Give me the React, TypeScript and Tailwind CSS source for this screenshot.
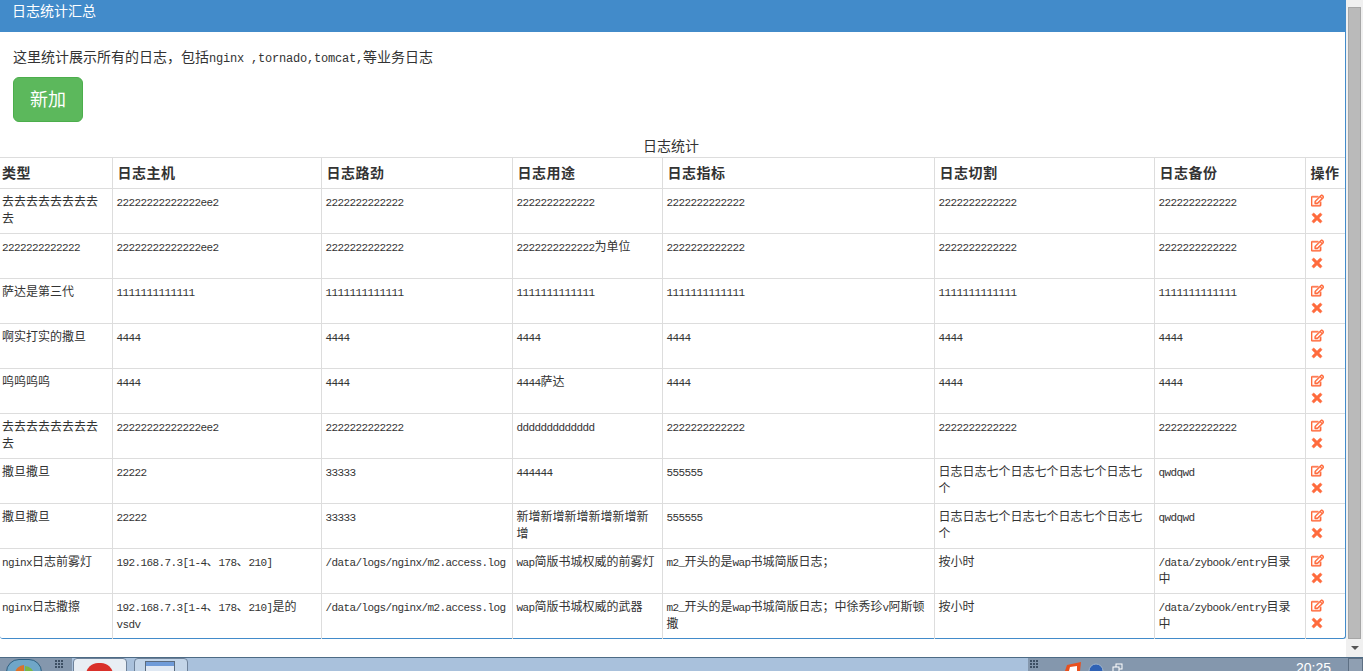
import { FaRegEdit, FaTimes } from "react-icons/fa";

const mono = "font-['Liberation_Mono','Noto_Sans_CJK_SC',monospace]";

const rows = [
  ["去去去去去去去去去", "22222222222222ee2", "2222222222222", "2222222222222", "2222222222222", "2222222222222", "2222222222222"],
  ["2222222222222", "22222222222222ee2", "2222222222222", "2222222222222为单位", "2222222222222", "2222222222222", "2222222222222"],
  ["萨达是第三代", "1111111111111", "1111111111111", "1111111111111", "1111111111111", "1111111111111", "1111111111111"],
  ["啊实打实的撒旦", "4444", "4444", "4444", "4444", "4444", "4444"],
  ["呜呜呜呜", "4444", "4444", "4444萨达", "4444", "4444", "4444"],
  ["去去去去去去去去去", "22222222222222ee2", "2222222222222", "ddddddddddddd", "2222222222222", "2222222222222", "2222222222222"],
  ["撒旦撒旦", "22222", "33333", "444444", "555555", "日志日志七个日志七个日志七个日志七个", "qwdqwd"],
  ["撒旦撒旦", "22222", "33333", "新增新增新增新增新增新增", "555555", "日志日志七个日志七个日志七个日志七个", "qwdqwd"],
  ["nginx日志前雾灯", "192.168.7.3[1-4、178、210]", "/data/logs/nginx/m2.access.log", "wap简版书城权威的前雾灯", "m2_开头的是wap书城简版日志；", "按小时", "/data/zybook/entry目录中"],
  ["nginx日志撒擦", "192.168.7.3[1-4、178、210]是的vsdv", "/data/logs/nginx/m2.access.log", "wap简版书城权威的武器", "m2_开头的是wap书城简版日志；中徐秀珍v阿斯顿撒", "按小时", "/data/zybook/entry目录中"],
];

const heads = ["类型", "日志主机", "日志路劲", "日志用途", "日志指标", "日志切割", "日志备份", "操作"];
const widths = ["w-[112px]", "w-[209px]", "w-[191px]", "w-[150px]", "w-[272px]", "w-[220px]", "w-[151px]", "w-[40px]"];

// latin runs are narrower than the cjk ones in this table
function CellText({ text }: { text: string }) {
  const parts = text.split(/([\x00-\x7f]+)/).filter(Boolean);
  return (
    <>
      {parts.map((p, i) =>
        /^[\x00-\x7f]+$/.test(p) ? (
          <span key={i} className="text-[11px] leading-none tracking-[-0.6px]">{p}</span>
        ) : (
          <span key={i}>{p}</span>
        )
      )}
    </>
  );
}

function GripDots() {
  return (
    <div className="grid grid-cols-3 gap-[1px]">
      {Array.from({ length: 9 }).map((_, i) => (
        <div key={i} className="h-[2px] w-[2px] bg-[#3d4f63]" />
      ))}
    </div>
  );
}

function Taskbar() {
  return (
    <div className="flex h-[14px] items-start overflow-hidden border-t border-[#4d6b85] bg-[#a9c1dc]">
      <div className="relative h-[14px] w-[72px] shrink-0 bg-[#8497ad]">
        <div className="absolute left-[6px] top-[1px] h-[26px] w-[36px] rounded-full border border-[#2f5f80] bg-[#6fa6c8]" />
        <div className="absolute left-[15px] top-[7px] h-[10px] w-[9px] rounded-tl-full bg-[#d8732e]" />
        <div className="absolute left-[25px] top-[8px] h-[10px] w-[9px] rounded-tr-full bg-[#7ab648]" />
        <div className="absolute left-[55px] top-[2px]"><GripDots /></div>
      </div>
      <div className="relative ml-[1px] h-[14px] w-[54px] shrink-0 overflow-hidden rounded-t-sm border border-[#6d8199] bg-[#e8eef4]">
        <div className="absolute left-[12px] top-[4px] h-[24px] w-[27px] rounded-full bg-[#d9302a]" />
      </div>
      <div className="relative ml-[7px] h-[14px] w-[54px] shrink-0 rounded-t-sm border border-[#6d8199] bg-[#c3d5e8]">
        <div className="absolute left-[10px] top-[2px] h-[14px] w-[30px] border border-[#5b6b7d] bg-[#dfe8f3]">
          <div className="h-[4px] bg-[#6f9bd8]" />
        </div>
      </div>
      <div className="ml-auto flex h-[14px] w-[335px] shrink-0 items-start bg-[#8497ad]">
        <div className="ml-[2px] mt-[2px] shrink-0"><GripDots /></div>
        <svg width="216" height="14" viewBox="0 0 216 14" className="shrink-0">
          <path d="M27 13 L29 7 L43 4 L42 13 Z" fill="#e8501e" />
          <path d="M31 13 L32 9 L39 8 L39 13 Z" fill="#fff" />
          <circle cx="58" cy="13" r="7" fill="#2f62b5" stroke="#9fb4cc" />
          <rect x="78" y="6" width="6" height="5" fill="none" stroke="#fff" />
          <rect x="75" y="9" width="6" height="5" fill="#8497ad" stroke="#fff" />
        </svg>
        <span className="ml-[42px] mt-[3px] text-[14px] leading-[14px] text-white font-['Liberation_Sans',sans-serif]">20:25</span>
        <div className="ml-auto h-[14px] w-[15px] border border-[#5d6f83] bg-[#8f9fb2]" />
      </div>
    </div>
  );
}

export default function App() {
  return (
    <div className="flex h-[671px] w-[1363px] flex-col overflow-hidden bg-white text-[#333]">
      <div className="flex min-h-0 flex-1">
        <div className="w-[1346px] shrink-0">
          <div className="h-[639px] rounded-b-[3px] border-r border-b border-[#428bca]">
            <div className={`h-[32px] bg-[#428bca] pl-[12px] text-[14px] leading-[24px] text-white ${mono}`}>日志统计汇总</div>
            <div className={`px-[13px] pt-[16px] text-[14px] leading-[20px] ${mono}`}>
              <p className="text-[14px]">
                这里统计展示所有的日志，包括<span className="text-[12px] tracking-[-0.2px]">nginx ,tornado,tomcat,</span>等业务日志
              </p>
              <button className="mt-[8px] block h-[45px] w-[70px] rounded-[6px] border border-[#4cae4c] bg-[#5cb85c] pt-[2px] text-[18px] text-white">新加</button>
            </div>
            <div className={`mt-[14px] h-[21px] pr-[3px] text-center text-[14px] leading-[23px] ${mono}`}>日志统计</div>
            <table className={`w-[1345px] table-fixed border-collapse text-[12px] leading-[17px] ${mono}`}>
              <colgroup>
                {widths.map((w, i) => (
                  <col key={i} className={w} />
                ))}
              </colgroup>
              <thead>
                <tr className="h-[31px] border-y border-[#ddd]">
                  {heads.map((h) => (
                    <th key={h} className="border-l border-[#ddd] pl-[5px] pr-0 pt-[2px] text-left align-middle text-[14px] font-bold tracking-[0.5px] first:border-l-0 first:pl-[2px]">
                      {h}
                    </th>
                  ))}
                </tr>
              </thead>
              <tbody>
                {rows.map((row, i) => (
                  <tr key={i} className="h-[45px] border-b border-[#ddd] last:border-b-0">
                    {row.map((c, j) => (
                      <td key={j} className="break-words border-l border-[#ddd] px-[4px] pt-[6px] align-top first:border-l-0 first:pl-[2px]">
                        <CellText text={c} />
                      </td>
                    ))}
                    <td className="border-l border-[#ddd] px-[5px] pt-[5px] align-top">
                      <FaRegEdit size={13} className="stroke-current stroke-[24] text-[#ff6a3c]" />
                      <FaTimes size={14} className="-ml-[1px] mt-[4px] stroke-current stroke-[24] text-[#ff6a3c]" />
                    </td>
                  </tr>
                ))}
              </tbody>
            </table>
          </div>
        </div>
        <div className="flex w-[17px] shrink-0 flex-col bg-[#f0f0f0]">
          <div className="h-[7px]" />
          <div className="mx-auto h-[632px] w-[13px] border border-[#a6a6a6] bg-[#bababa]" />
          <div className="mx-auto mt-[7px] h-0 w-0 border-x-[4px] border-t-[4px] border-x-transparent border-t-[#555]" />
        </div>
      </div>
      <Taskbar />
    </div>
  );
}
